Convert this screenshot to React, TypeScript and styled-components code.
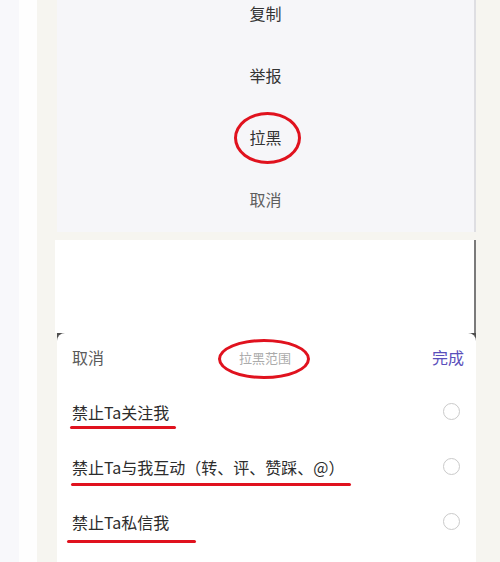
import React from 'react';
import styled, {createGlobalStyle} from 'styled-components';

const GlobalStyle = createGlobalStyle`
  body {
    margin: 0;
    font-family: "Noto Sans CJK SC", "Noto Sans", sans-serif;
  }
`

const Page = styled.div`
  display: flex;
  height: 562px;
  overflow: hidden;
  background: #f8f8fb;
`

const Gutter = styled.div<{ $w: number; $bg: string }>`
  width: ${p => p.$w}px;
  flex-shrink: 0;
  background: ${p => p.$bg};
`

const Stage = styled.div`
  flex: 1;
  display: flex;
  flex-direction: column;
  background: #f6f5f0;
  padding: 0 24px 0 18px;
`

const MenuPanel = styled.div`
  height: 232px;
  margin-left: 2px;
  background: #f6f6f9;
  border-right: 2px solid #dedee2;
  overflow: hidden;
`

const MenuList = styled.ul`
  list-style: none;
  margin: -18px 0 0;
  padding: 0;
`

const MenuItem = styled.li<{ $muted?: boolean }>`
  position: relative;
  height: 62px;
  display: flex;
  align-items: center;
  justify-content: center;
  font-size: 16px;
  color: ${p => p.$muted ? '#5e5e5e' : '#333'};
`

const BlankPanel = styled.div`
  height: 93px;
  margin-top: 8px;
  background: #fff;
  border-right: 2px solid #7a7a7a;
`

const SheetBack = styled.div`
  flex: 1;
  margin-left: 2px;
  background: #4e4e4e;
  display: flex;
`

const Sheet = styled.div`
  flex: 1;
  background: #fff;
  border-radius: 8px 8px 0 0;
`

const SheetHeader = styled.div`
  position: relative;
  height: 48px;
  padding: 0 12px 3px 15px;
  display: flex;
  align-items: center;
  justify-content: space-between;
  font-size: 16px;
`

const HeaderAction = styled.span<{ $primary?: boolean }>`
  color: ${p => p.$primary ? '#5a4fbb' : '#5a5a5a'};
`

const HeaderTitle = styled.span`
  position: relative;
  font-size: 13px;
  color: #ababab;
  margin-left: -6px;
`

const Option = styled.div`
  position: relative;
  height: 55px;
  display: flex;
  align-items: center;
  justify-content: space-between;
  padding: 0 16px 0 15px;
  font-size: 16px;
  color: #2c2c2c;
`

const Radio = styled.span`
  width: 15px;
  height: 15px;
  border: 1.5px solid #cacaca;
  border-radius: 50%;
`

const Ellipse = styled.span<{ $w: number; $h: number; $dx?: number; $dy?: number }>`
  position: absolute;
  left: 50%;
  top: 50%;
  width: ${p => p.$w}px;
  height: ${p => p.$h}px;
  margin-left: ${p => -p.$w / 2 + (p.$dx || 0)}px;
  margin-top: ${p => -p.$h / 2 + (p.$dy || 0)}px;
  border: 3px solid #e0121e;
  border-radius: 50%;
  box-sizing: border-box;
  pointer-events: none;
`

const Underline = styled.span<{ $left: number; $width: number; $top: number }>`
  position: absolute;
  left: ${p => p.$left}px;
  top: ${p => p.$top}px;
  width: ${p => p.$width}px;
  height: 3px;
  border-radius: 2px;
  background: #e0121e;
`

const menu = ['复制', '举报', '拉黑', '取消'];

const options = [
    {label: '禁止Ta关注我', left: 13, width: 106, top: 42},
    {label: '禁止Ta与我互动（转、评、赞踩、@）', left: 14, width: 280, top: 44},
    {label: '禁止Ta私信我', left: 10, width: 129, top: 46},
];

function App() {
    return (
        <>
            <GlobalStyle/>
            <Page>
                <Gutter $w={19} $bg="#f8f8fb"/>
                <Gutter $w={18} $bg="#fefefe"/>
                <Stage>
                    <MenuPanel>
                        <MenuList>
                            {menu.map((m, i) => (
                                <MenuItem key={m} $muted={i === 3}>
                                    {m}
                                    {m === '拉黑' && <Ellipse $w={67} $h={52} $dx={2} $dy={1}/>}
                                </MenuItem>
                            ))}
                        </MenuList>
                    </MenuPanel>
                    <BlankPanel/>
                    <SheetBack>
                        <Sheet>
                            <SheetHeader>
                                <HeaderAction>取消</HeaderAction>
                                <HeaderTitle>
                                    拉黑范围
                                    <Ellipse $w={92} $h={40} $dx={-1} $dy={2}/>
                                </HeaderTitle>
                                <HeaderAction $primary>完成</HeaderAction>
                            </SheetHeader>
                            {options.map(o => (
                                <Option key={o.label}>
                                    <span>{o.label}</span>
                                    <Radio/>
                                    <Underline $left={o.left} $width={o.width} $top={o.top}/>
                                </Option>
                            ))}
                        </Sheet>
                    </SheetBack>
                </Stage>
            </Page>
        </>
    );
}

export default App;
